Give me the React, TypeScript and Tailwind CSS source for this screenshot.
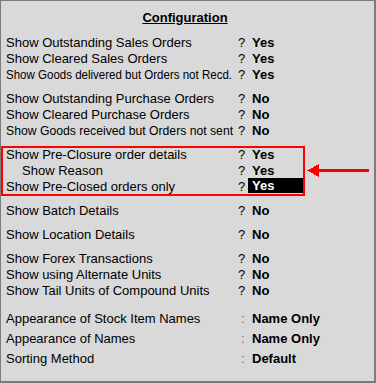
type Row = {
  label: string
  value: string
  sep?: string
  indent?: boolean
  active?: boolean
  squeeze?: string
}

const salesRows: Row[] = [
  { label: "Show Outstanding Sales Orders", value: "Yes" },
  { label: "Show Cleared Sales Orders", value: "Yes" },
  { label: "Show Goods delivered but Orders not Recd.", value: "Yes", squeeze: "scale-x-[0.886]" },
]

const purchaseRows: Row[] = [
  { label: "Show Outstanding Purchase Orders", value: "No" },
  { label: "Show Cleared Purchase Orders", value: "No" },
  { label: "Show Goods received but Orders not sent", value: "No", squeeze: "scale-x-[0.938]" },
]

const closureRows: Row[] = [
  { label: "Show Pre-Closure order details", value: "Yes" },
  { label: "Show Reason", value: "Yes", indent: true },
  { label: "Show Pre-Closed orders only", value: "Yes", active: true },
]

const unitRows: Row[] = [
  { label: "Show Forex Transactions", value: "No" },
  { label: "Show using Alternate Units", value: "No" },
  { label: "Show Tail Units of Compound Units", value: "No" },
]

const nameRows: Row[] = [
  { label: "Appearance of Stock Item Names", value: "Name Only", sep: ":" },
  { label: "Appearance of Names", value: "Name Only", sep: ":" },
  { label: "Sorting Method", value: "Default", sep: ":" },
]

const ConfigRow = ({ row }: { row: Row }) => {
  const colon = row.sep === ":"
  return (
    <div className="flex h-[16px] items-start pl-[5px] leading-[16px]">
      <span className={`w-[232px] overflow-visible whitespace-nowrap ${row.indent ? "pl-[16px]" : ""}`}>
        <span className={`inline-block origin-left ${row.squeeze ?? ""}`}>{row.label}</span>
      </span>
      <span className={`w-[10px] ${colon ? "pl-[3px] text-[#6b6b6b]" : ""}`}>{colon ? ":" : "?"}</span>
      {row.active ? (
        <span className="-mt-[1px] h-[15px] w-[55px] bg-black pl-[4px] font-bold leading-[16px] text-white">{row.value}</span>
      ) : (
        <span className="pl-[4px] font-bold">{row.value}</span>
      )}
    </div>
  )
}

export default function App() {
  return (
    <div className="relative h-[383px] w-[376px] overflow-hidden border-t border-l border-r-2 border-b-2 border-[#7c7c7c] bg-[#d9d9d9] font-['Liberation_Sans',Arial,sans-serif] text-[13px] text-black">
      <div className="flex justify-center pt-[9px] pr-[5px]">
        <span className="font-bold leading-[16px] underline">Configuration</span>
      </div>

      <div className="mt-[9px] flex flex-col">
        {salesRows.map((r) => <ConfigRow key={r.label} row={r} />)}
      </div>

      <div className="mt-[8px] flex flex-col">
        {purchaseRows.map((r) => <ConfigRow key={r.label} row={r} />)}
      </div>

      {/* highlighted block */}
      <div className="mt-[7px] flex w-[304px] flex-col py-[1px] outline-2 -outline-offset-2 outline-[#ff0000]">
        {closureRows.map((r) => <ConfigRow key={r.label} row={r} />)}
      </div>

      <div className="mt-[7px]">
        <ConfigRow row={{ label: "Show Batch Details", value: "No" }} />
      </div>

      <div className="mt-[8px]">
        <ConfigRow row={{ label: "Show Location Details", value: "No" }} />
      </div>

      <div className="mt-[8px] flex flex-col">
        {unitRows.map((r) => <ConfigRow key={r.label} row={r} />)}
      </div>

      <div className="mt-[12px] flex flex-col gap-[4px]">
        {nameRows.map((r) => <ConfigRow key={r.label} row={r} />)}
      </div>

      {/* arrow pointing at the box */}
      <svg className="absolute left-[305px] top-[163px]" width="63" height="13" viewBox="0 0 63 13" shapeRendering="crispEdges">
        <polygon points="1,6.5 13,0 13,13" fill="#ff0000" />
        <rect x="12" y="5" width="51" height="3" fill="#ff0000" />
      </svg>
    </div>
  )
}
